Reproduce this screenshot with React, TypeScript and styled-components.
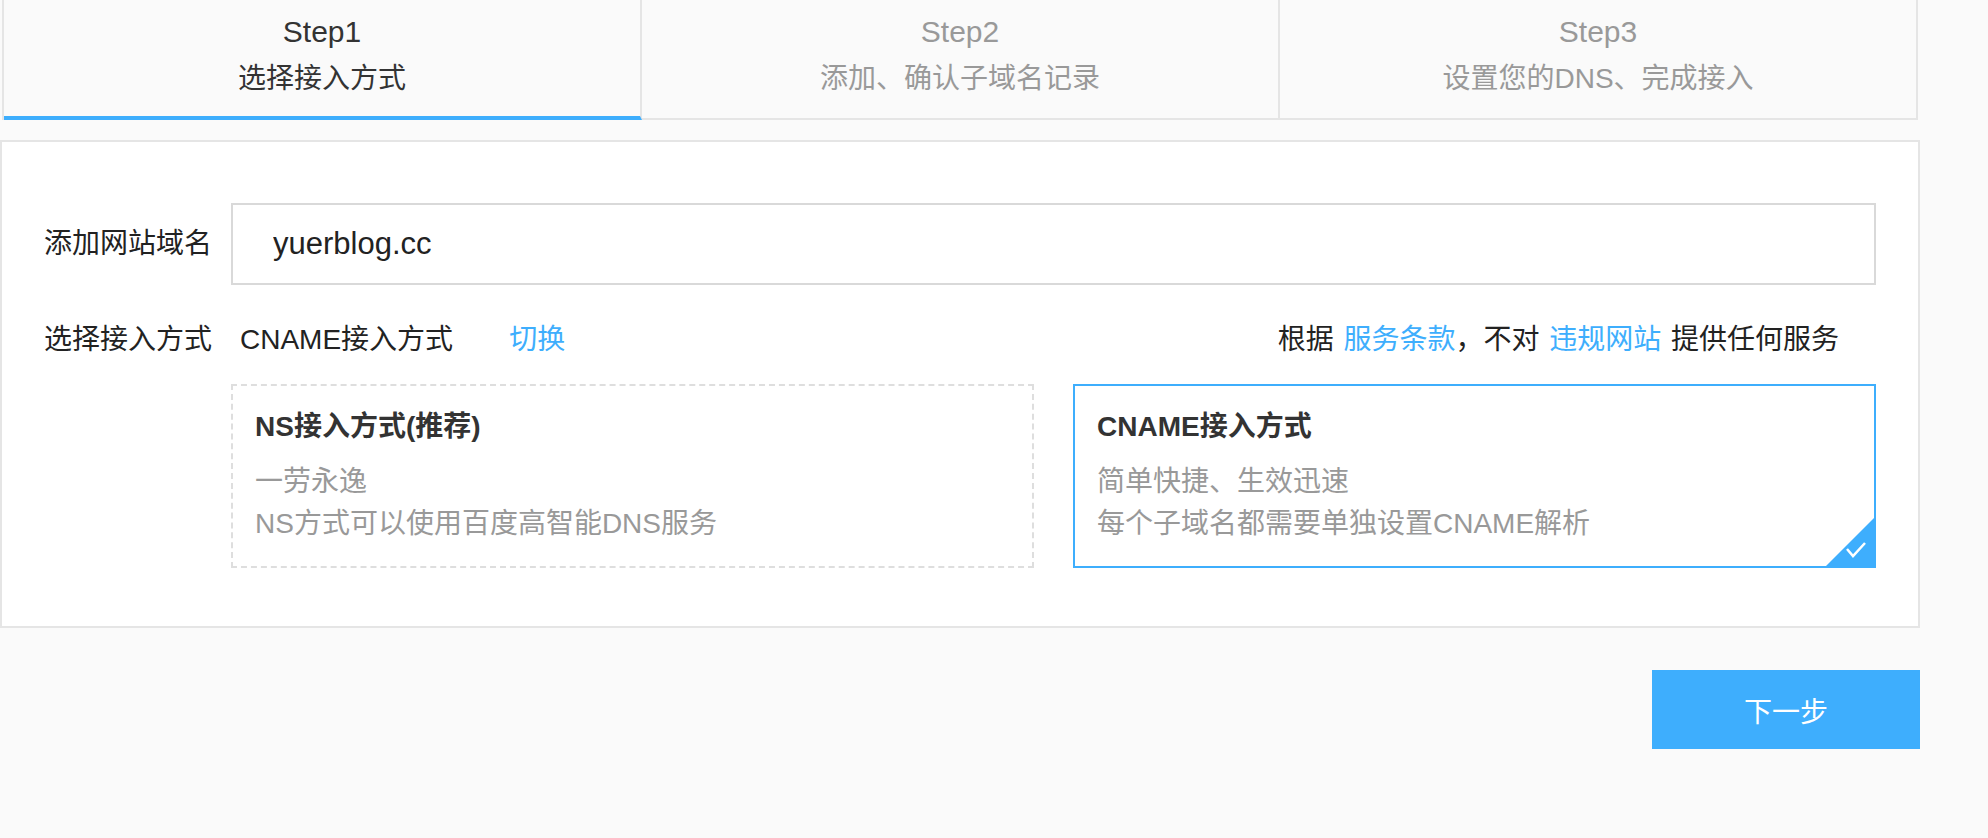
import React, { useState } from 'react';
import styled, { createGlobalStyle } from 'styled-components';

const BLUE = '#3eaefd';
const LINE = '#e5e5e5';

const GlobalStyle = createGlobalStyle`
  html, body {
    margin: 0;
    padding: 0;
    background: #fafafa;
  }
  body {
    font-family: "Liberation Sans", "Noto Sans CJK SC", sans-serif;
    color: #333;
  }
`;

const Page = styled.div`
  width: 1920px;
  padding-bottom: 80px;
`;

const Steps = styled.div`
  display: flex;
  margin-left: 2px;
  width: 1916px;
  border-left: 2px solid ${LINE};
  box-sizing: border-box;
`;

const StepTab = styled.div<{ $active?: boolean }>`
  flex: 1;
  height: 120px;
  box-sizing: border-box;
  padding-top: 11px;
  border-right: 2px solid ${LINE};
  border-bottom: ${({ $active }) => ($active ? `4px solid ${BLUE}` : `2px solid ${LINE}`)};
  background: #fafafa;
  text-align: center;
  color: ${({ $active }) => ($active ? '#333' : '#999')};
`;

const StepNum = styled.div`
  font-size: 30px;
  line-height: 42px;
`;

const StepName = styled.div`
  font-size: 28px;
  line-height: 42px;
  margin-top: 5px;
`;

const Panel = styled.div`
  margin-top: 20px;
  background: #fff;
  border: 2px solid ${LINE};
  padding: 61px 42px 58px 0;
`;

const Row = styled.div`
  display: flex;
  align-items: center;
`;

const Label = styled.div`
  width: 187px;
  flex-shrink: 0;
  padding-left: 42px;
  font-size: 28px;
  line-height: 42px;
  color: #222;
`;

const DomainInput = styled.input`
  flex: 1;
  height: 82px;
  box-sizing: border-box;
  border: 2px solid #d9d9d9;
  padding: 0 40px;
  font-family: "Liberation Sans", "Noto Sans CJK SC", sans-serif;
  font-size: 31px;
  color: #222;
  outline: none;
`;

const ModeRow = styled(Row)`
  margin-top: 34px;
`;

const ModeText = styled.span`
  font-size: 28px;
  line-height: 42px;
  color: #222;
  margin-left: 9px;
`;

const Link = styled.a`
  color: ${BLUE};
  text-decoration: none;
  cursor: pointer;
`;

const SwitchLink = styled(Link)`
  font-size: 28px;
  line-height: 42px;
  margin-left: 56px;
`;

const Notice = styled.div`
  margin-left: auto;
  margin-right: 37px;
  font-size: 28px;
  line-height: 42px;
  color: #222;
  white-space: pre;
  word-spacing: 2px;
`;

const Cards = styled.div`
  display: flex;
  gap: 39px;
  margin-top: 23px;
  margin-left: 229px;
`;

const Card = styled.div<{ $selected?: boolean }>`
  position: relative;
  flex: 1;
  padding: 20px 22px 21px;
  border: 2px ${({ $selected }) => ($selected ? `solid ${BLUE}` : 'dashed #dedede')};
  background: #fff;
  cursor: pointer;
`;

const CardTitle = styled.div`
  font-size: 28px;
  line-height: 42px;
  font-weight: 700;
  color: #333;
`;

const CardDesc = styled.div`
  margin-top: 13px;
  font-size: 28px;
  line-height: 42px;
  color: #999;
`;

const Corner = styled.svg`
  position: absolute;
  right: 0;
  bottom: 0;
`;

const Footer = styled.div`
  display: flex;
  justify-content: flex-end;
  margin-top: 42px;
`;

const NextButton = styled.button`
  width: 268px;
  height: 79px;
  border: none;
  background: ${BLUE};
  color: #fff;
  font-family: "Liberation Sans", "Noto Sans CJK SC", sans-serif;
  font-size: 28px;
  cursor: pointer;
`;

const steps = [
  { num: 'Step1', name: '选择接入方式' },
  { num: 'Step2', name: '添加、确认子域名记录' },
  { num: 'Step3', name: '设置您的DNS、完成接入' },
];

const modes = [
  { key: 'ns', title: 'NS接入方式(推荐)', lines: ['一劳永逸', 'NS方式可以使用百度高智能DNS服务'] },
  { key: 'cname', title: 'CNAME接入方式', lines: ['简单快捷、生效迅速', '每个子域名都需要单独设置CNAME解析'] },
];

const App: React.FC = () => {
  const [domain, setDomain] = useState('yuerblog.cc');
  const [mode, setMode] = useState('cname');

  return (
    <Page>
      <GlobalStyle />
      <Steps>
        {steps.map((s, i) => (
          <StepTab key={s.num} $active={i === 0}>
            <StepNum>{s.num}</StepNum>
            <StepName>{s.name}</StepName>
          </StepTab>
        ))}
      </Steps>
      <Panel>
        <Row>
          <Label>添加网站域名</Label>
          <DomainInput value={domain} onChange={e => setDomain(e.target.value)} />
        </Row>
        <ModeRow>
          <Label>选择接入方式</Label>
          <ModeText>{mode === 'cname' ? 'CNAME接入方式' : 'NS接入方式'}</ModeText>
          <SwitchLink onClick={() => setMode(mode === 'cname' ? 'ns' : 'cname')}>切换</SwitchLink>
          <Notice>
            根据 <Link>服务条款</Link>，不对 <Link>违规网站</Link> 提供任何服务
          </Notice>
        </ModeRow>
        <Cards>
          {modes.map(m => (
            <Card key={m.key} $selected={mode === m.key} onClick={() => setMode(m.key)}>
              <CardTitle>{m.title}</CardTitle>
              <CardDesc>
                {m.lines.map(l => (
                  <div key={l}>{l}</div>
                ))}
              </CardDesc>
              {mode === m.key && (
                <Corner width="48" height="48" viewBox="0 0 48 48">
                  <polygon points="48,0 48,48 0,48" fill={BLUE} />
                  <polyline points="21,31 27,38 39,25" fill="none" stroke="#fff" strokeWidth="2.5" />
                </Corner>
              )}
            </Card>
          ))}
        </Cards>
      </Panel>
      <Footer>
        <NextButton>下一步</NextButton>
      </Footer>
    </Page>
  );
};

export default App;
